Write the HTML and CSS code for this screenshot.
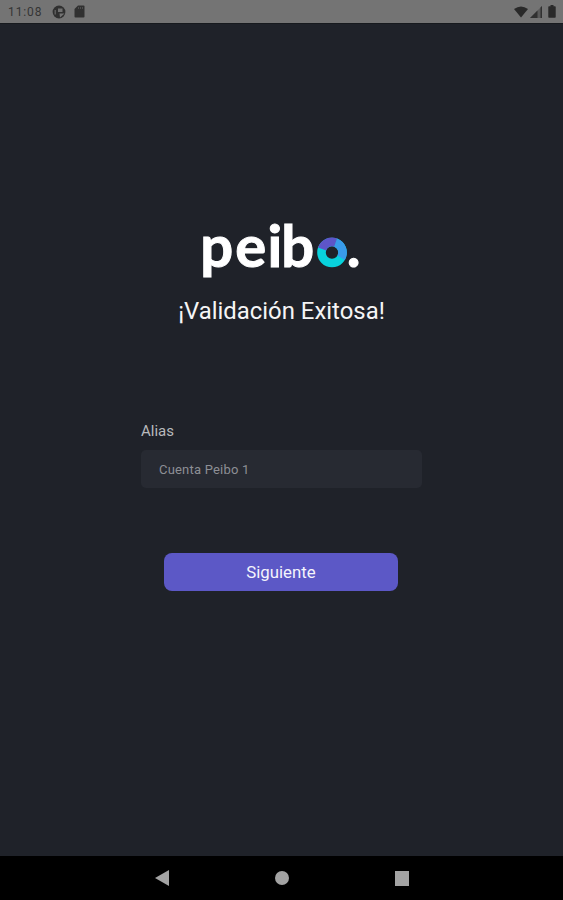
FILE: index.html
```
<!DOCTYPE html>
<html lang="es">
  <head>
    <meta charset="UTF-8" />
    <meta name="viewport" content="width=device-width, initial-scale=1.0" />
    <title>Peibo</title>
    <link rel="stylesheet" href="styles.css">
  </head>
  <body>
    <header class="status-bar">
      <div class="status-left">
        <span class="clock">11:08</span>
        <svg class="icon-app" width="14" height="14" viewBox="0 0 14 14">
          <circle cx="7" cy="7" r="6.4" fill="#303030" />
          <path d="M6 3.5h4.5v3.500H6z" fill="#707070" />
          <path d="M7.500 8.500h5L8 12.500z" fill="#747474" />
          <path d="M2.500 5h1.500v4.500H2.500z" fill="#5c5c5c" />
        </svg>
        <svg width="11" height="13" viewBox="0 0 11 13">
          <path d="M4 .5h5.5q1 0 1 1v10q0 1-1 1h-8q-1 0-1-1V4z" fill="#303030" />
          <path d="M4.5 2v2M6.5 2v2M8.5 2v2" stroke="#555" stroke-width=".8" />
        </svg>
      </div>
      <div class="status-right">
        <svg width="14" height="12" viewBox="0 0 14 12">
          <path d="M0 3Q7-2 14 3L7 11.5z" fill="#292929" />
        </svg>
        <svg class="icon-signal" width="12" height="12" viewBox="0 0 12 12">
          <path d="M0 12 12 0v12z" fill="#5a5a5a" />
          <path d="M0 12 7.5 4.5V12zM10.5 1.5 12 0v12h-1.5z" fill="#303030" />
        </svg>
        <svg width="8" height="13" viewBox="0 0 8 13">
          <path d="M2.5 0h3v1.3H7q.7 0 .7.7v10q0 .7-.7.7H1q-.7 0-.7-.7V2q0-.7.7-.7h1.5z" fill="#292929" />
        </svg>
      </div>
    </header>

    <main class="content">
      <svg class="logo" width="200" height="90" viewBox="-10 -10 200 90">
        <text class="logo-text" y="51.5" x="10.2 45.2 77.6 91.2">peib</text>
        <g fill="none" stroke-width="8.6">
          <circle cx="142" cy="37.5" r="10.5" stroke="#08d2dc" />
          <path d="M145.6 27.6A10.5 10.5 0 0 1 151.1 42.8" stroke="#399bea" />
          <path d="M132.1 34A10.5 10.5 0 0 1 145.6 27.6" stroke="#5d55c8" />
        </g>
        <text class="logo-text" y="51.5" x="156.8">.</text>
      </svg>

      <h1>¡Validación Exitosa!</h1>

      <form class="alias-form">
        <label for="alias">Alias</label>
        <input id="alias" type="text" placeholder="Cuenta Peibo 1" />
        <button type="button" class="btn">Siguiente</button>
      </form>
    </main>

    <nav class="nav-bar">
      <svg width="14" height="16" viewBox="0 0 14 16">
        <path d="M0 8 14 0v16z" fill="#a3a3a3" />
      </svg>
      <svg width="14" height="14" viewBox="0 0 14 14">
        <circle cx="7" cy="7" r="7" fill="#a3a3a3" />
      </svg>
      <svg width="14" height="15" viewBox="0 0 14 15">
        <path d="M0 0h14v15H0z" fill="#a3a3a3" />
      </svg>
    </nav>
  </body>
</html>
```

FILE: styles.css
```
* {
  margin: 0;
  padding: 0;
  box-sizing: border-box;
}

body {
  font-family: Roboto, sans-serif;
  background-color: #1f2229;
  height: 100vh;
  display: flex;
  flex-direction: column;
  overflow: hidden;
}

svg {
  display: block;
}

.status-bar {
  height: 24px;
  background-color: #747474;
  border-bottom: 1px solid #171a1e;
  display: flex;
  justify-content: space-between;
  align-items: center;
  padding: 0 7px 0 8px;
}

.status-left,
.status-right {
  display: flex;
  align-items: center;
}

.clock {
  font-size: 12px;
  letter-spacing: 0.9px;
  color: #343434;
  width: 44px;
}

.icon-app {
  margin-right: 8px;
}

.icon-signal {
  margin: 0 6px 0 2px;
}

.content {
  flex: 1;
  display: flex;
  flex-direction: column;
  align-items: center;
  padding-top: 181px;
}

.logo {
  margin-right: 3px;
  overflow: visible;
}

.logo-text {
  font-family: Lato, sans-serif;
  font-size: 58px;
  font-weight: 700;
  fill: #fff;
  stroke: #fff;
  stroke-width: 1px;
}

h1 {
  font-size: 23.9px;
  font-weight: 400;
  line-height: 28px;
  color: #f5f5f6;
  margin-top: 2px;
}

.alias-form {
  width: 281px;
  margin-top: 97px;
  display: flex;
  flex-direction: column;
}

.alias-form label {
  font-size: 15px;
  line-height: 18px;
  color: #b9babd;
}

.alias-form input {
  height: 38px;
  margin-top: 10px;
  padding: 0 18px;
  border: none;
  border-radius: 5px;
  background-color: #272a32;
  font-family: inherit;
  font-size: 13px;
  letter-spacing: 0.2px;
  color: #8d8f95;
}

.alias-form input::placeholder {
  color: #8d8f95;
}

.btn {
  width: 234px;
  height: 38px;
  margin: 65px 0 0 23px;
  border: none;
  border-radius: 8px;
  background-color: #5c58c6;
  color: #f4f4fc;
  font-family: inherit;
  font-size: 16.8px;
}

.nav-bar {
  height: 44px;
  background-color: #000;
  display: flex;
  justify-content: space-between;
  align-items: center;
  padding: 0 154px 0 155px;
}
```
